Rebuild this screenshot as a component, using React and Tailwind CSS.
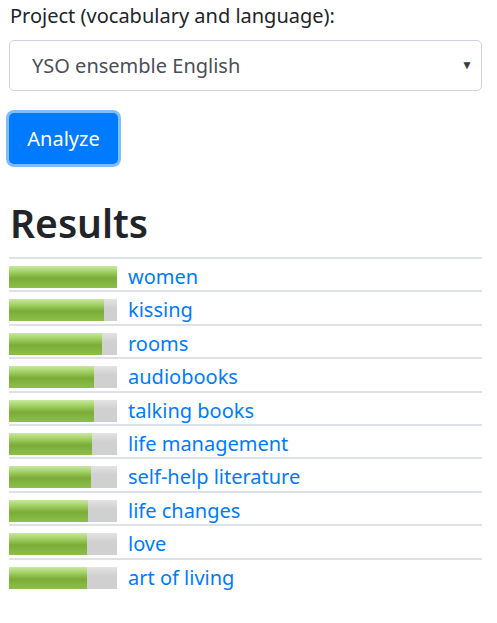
const RESULTS = [
  { label: 'women', score: 100 },
  { label: 'kissing', score: 88 },
  { label: 'rooms', score: 86 },
  { label: 'audiobooks', score: 79 },
  { label: 'talking books', score: 79 },
  { label: 'life management', score: 77 },
  { label: 'self-help literature', score: 76 },
  { label: 'life changes', score: 73 },
  { label: 'love', score: 72 },
  { label: 'art of living', score: 72 },
];

function ScoreBar({ score }) {
  return (
    <div className="w-[108px] h-[22px] bg-[linear-gradient(#e4e4e4,#d0d0d0_40%,#d0d0d0)] shrink-0">
      <div
        className="h-full bg-[linear-gradient(#c9e8a2,#a4d266_25%,#7bab38_55%,#8cc04a)]"
        style={{ width: `${score}%` }}
      />
    </div>
  );
}

export default function App() {
  return (
    <div className="font-['Noto_Sans',sans-serif] text-[#212529] pl-[9px] pr-[15px] pt-[1px]">
      <label className="block text-[20px] leading-[30px] pl-px">Project (vocabulary and language):</label>
      <div className="relative mt-[9px] h-[51px] border border-[#ced4da] rounded-[5px] flex items-center pl-[22px]">
        <span className="text-[20px] text-[#495057]">YSO ensemble English</span>
        <span className="absolute right-[8px] top-[15px] text-[12px] text-[#343a40]">▼</span>
      </div>
      <button className="mt-[22px] h-[51px] w-[109px] rounded-[5px] bg-[#007bff] text-white text-[20px] ring-[3px] ring-[#80bdff]">
        Analyze
      </button>
      <h1 className="mt-[35px] text-[39px] leading-[48px] font-semibold pl-px">Results</h1>
      <div className="mt-[10px]">
        {RESULTS.map((r) => (
          <div key={r.label} className="flex items-start gap-[11px] h-[33.4px] border-t-2 border-[#dee2e6] pt-[7px]">
            <ScoreBar score={r.score} />
            <a className="text-[20px] leading-[21px] text-[#007bff]">{r.label}</a>
          </div>
        ))}
      </div>
    </div>
  );
}
